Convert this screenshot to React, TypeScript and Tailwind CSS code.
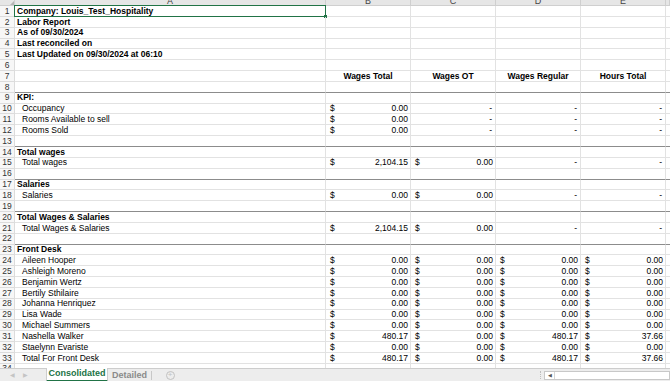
const grid = 'grid grid-cols-[15px_311px_85px_85px_85px_85px_1fr]';

type Row = {
  label?: string;
  kind?: 'bold' | 'item' | 'head';
  vals?: string[];
  thick?: boolean;
};

const z = ['$0.00', '$0.00', '$0.00', '$0.00'];

const rows: Row[] = [
  { label: 'Company: Louis_Test_Hospitality', kind: 'bold' },
  { label: 'Labor Report', kind: 'bold' },
  { label: 'As of 09/30/2024', kind: 'bold' },
  { label: 'Last reconciled on', kind: 'bold' },
  { label: 'Last Updated on 09/30/2024 at 06:10', kind: 'bold' },
  {},
  { kind: 'head', vals: ['Wages Total', 'Wages OT', 'Wages Regular', 'Hours Total'] },
  { thick: true },
  { label: 'KPI:', kind: 'bold' },
  { label: 'Occupancy', kind: 'item', vals: ['$0.00', '-', '-', '-'] },
  { label: 'Rooms Available to sell', kind: 'item', vals: ['$0.00', '-', '-', '-'] },
  { label: 'Rooms Sold', kind: 'item', vals: ['$0.00', '-', '-', '-'] },
  { thick: true },
  { label: 'Total wages', kind: 'bold' },
  { label: 'Total wages', kind: 'item', vals: ['$2,104.15', '$0.00', '-', '-'] },
  { thick: true },
  { label: 'Salaries', kind: 'bold' },
  { label: 'Salaries', kind: 'item', vals: ['$0.00', '$0.00', '-', '-'] },
  { thick: true },
  { label: 'Total Wages & Salaries', kind: 'bold' },
  { label: 'Total Wages & Salaries', kind: 'item', vals: ['$2,104.15', '$0.00', '-', '-'] },
  { thick: true },
  { label: 'Front Desk', kind: 'bold' },
  { label: 'Aileen Hooper', kind: 'item', vals: z },
  { label: 'Ashleigh Moreno', kind: 'item', vals: z },
  { label: 'Benjamin Wertz', kind: 'item', vals: z },
  { label: 'Bertily Sthilaire', kind: 'item', vals: z },
  { label: 'Johanna Henriquez', kind: 'item', vals: z },
  { label: 'Lisa Wade', kind: 'item', vals: z },
  { label: 'Michael Summers', kind: 'item', vals: z },
  { label: 'Nashella Walker', kind: 'item', vals: ['$480.17', '$0.00', '$480.17', '$37.66'] },
  { label: 'Staelynn Evariste', kind: 'item', vals: z },
  { label: 'Total For Front Desk', kind: 'item', vals: ['$480.17', '$0.00', '$480.17', '$37.66'] },
];

function ValueCell({ v, head, thick }: { v?: string; head?: boolean; thick?: boolean }) {
  const border = thick ? 'border-b-[#8c8c8c]' : 'border-b-[#e2e2e2]';
  if (head) {
    return (
      <div className={`border-r border-b border-r-[#e2e2e2] ${border} flex items-center justify-center font-bold`}>
        {v}
      </div>
    );
  }
  if (v && v.startsWith('$')) {
    return (
      <div className={`border-r border-b border-r-[#e2e2e2] ${border} flex items-center justify-between pl-[4px] pr-[2px]`}>
        <span>$</span>
        <span>{v.slice(1)}</span>
      </div>
    );
  }
  return (
    <div className={`border-r border-b border-r-[#e2e2e2] ${border} flex items-center justify-end pr-[3px]`}>
      {v}
    </div>
  );
}

export default function App() {
  return (
    <div className="w-[670px] h-[381px] overflow-hidden bg-white flex flex-col text-[8.5px] leading-none text-black font-['Liberation_Sans',Arial,sans-serif]">
      {/* column letters, clipped */}
      <div className={`${grid} h-[6px] bg-[#e6e6e6] border-b border-[#cfcfcf] overflow-hidden text-[#444] text-[9px] shrink-0`}>
        <div className="border-r border-[#cfcfcf] flex justify-end items-end">
          <svg width="5" height="5" viewBox="0 0 5 5"><path d="M5 0 L5 5 L0 5 Z" fill="#b5b5b5" /></svg>
        </div>
        {['A', 'B', 'C', 'D', 'E', ''].map((l, i) => (
          <div key={i} className="border-r border-[#cfcfcf] flex justify-center">
            <span className="-mt-[3px]">{l}</span>
          </div>
        ))}
      </div>

      <div className="flex flex-col shrink-0">
        {rows.map((r, i) => {
          const border = r.thick ? 'border-b-[#8c8c8c]' : 'border-b-[#e2e2e2]';
          return (
            <div key={i} className={`${grid} h-[10.85px]`}>
              <div className="border-r border-b border-[#dcdcdc] bg-[#f7f7f7] flex items-center justify-center text-[#333]">
                {i + 1}
              </div>
              <div
                className={`relative border-r border-b border-r-[#e2e2e2] ${border} flex items-center ${
                  r.kind === 'item' ? 'pl-[7px]' : 'pl-[2px]'
                } ${r.kind === 'bold' ? 'font-bold' : ''}`}
              >
                {r.label}
                {i === 0 && (
                  <>
                    <div className="absolute -inset-px border border-[#217346]" />
                    <div className="absolute -right-[2px] -bottom-[2px] w-[3px] h-[3px] bg-[#217346]" />
                  </>
                )}
              </div>
              {[0, 1, 2, 3].map((c) => (
                <ValueCell key={c} v={r.vals?.[c]} head={r.kind === 'head'} thick={r.thick} />
              ))}
              <div className={`border-b ${border}`} />
            </div>
          );
        })}
        <div className={`${grid} h-[4px] overflow-hidden`}>
          <div className="border-r border-[#dcdcdc] bg-[#f7f7f7] flex justify-center text-[#333]">
            <span>34</span>
          </div>
          <div className="border-r border-[#e2e2e2]" />
          <div className="border-r border-[#e2e2e2]" />
          <div className="border-r border-[#e2e2e2]" />
          <div className="border-r border-[#e2e2e2]" />
          <div className="border-r border-[#e2e2e2]" />
          <div />
        </div>
      </div>

      {/* sheet tabs */}
      <div className="flex-1 bg-[#ededed] border-t border-[#cdcdcd] flex items-stretch text-[9px]">
        <div className="w-[46px] flex items-center gap-[8px] pl-[10px] text-[#c4c4c4] text-[6px]">
          <span>◀</span>
          <span>▶</span>
        </div>
        <div className="w-[62px] -mt-px bg-white border-x border-[#cdcdcd] border-b-2 border-b-[#217346] flex items-center justify-center font-bold text-[#217346]">
          Consolidated
        </div>
        <div className="w-[44px] flex items-center justify-center text-[#8a8a8a] font-bold border-r border-[#c8c8c8] my-[2px]">
          Detailed
        </div>
        <div className="w-[36px] flex items-center justify-center">
          <div className="w-[9px] h-[9px] rounded-full border border-[#c2c2c2] flex items-center justify-center text-[#c2c2c2] text-[8px] leading-none">
            +
          </div>
        </div>
        <div className="flex-1" />
        <div className="w-[8px] flex items-center justify-center">
          <div className="h-[8px] border-l border-dotted border-[#bdbdbd]" />
        </div>
        <div className="w-[126px] my-[2px] bg-white border border-[#c8c8c8] flex items-stretch">
          <div className="w-[10px] border-r border-[#d6d6d6] flex items-center justify-center text-[#555] text-[5px]">◀</div>
          <div className="flex-1" />
        </div>
      </div>
    </div>
  );
}
